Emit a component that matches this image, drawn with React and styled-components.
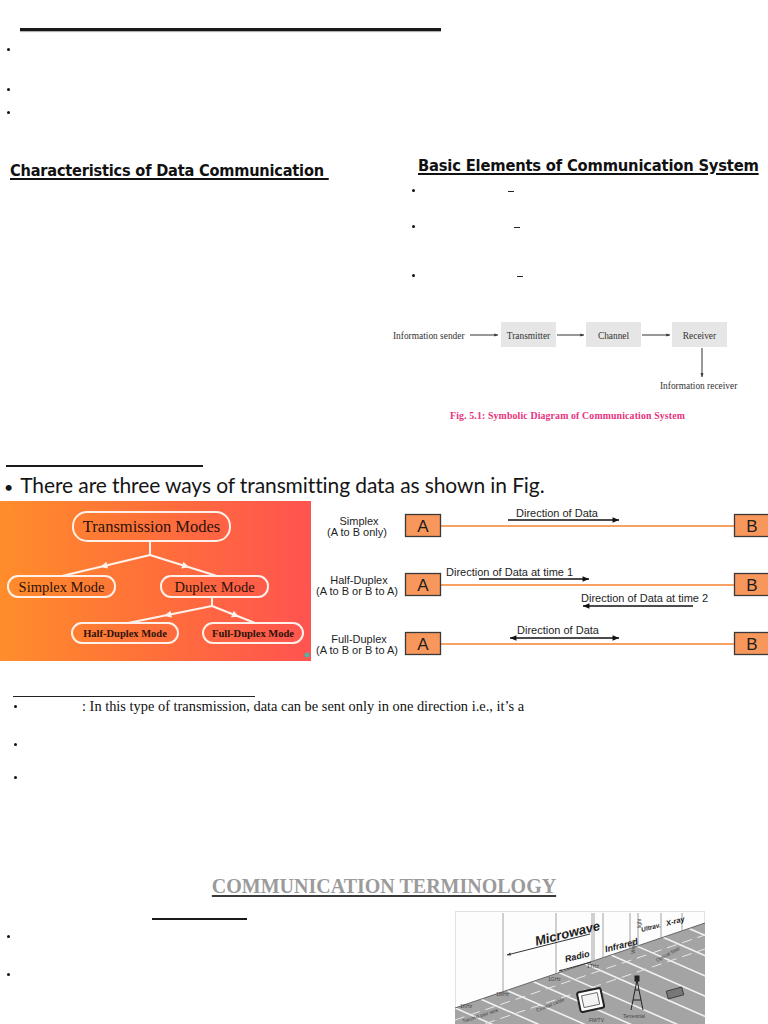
import React from "react";
import styled, { createGlobalStyle } from "styled-components";

const Global = createGlobalStyle`
  html, body { margin: 0; padding: 0; background: #fff; }
  body { font-family: "Liberation Serif", "Times New Roman", serif; color: #111; }
`;

const Page = styled.div`
  width: 768px;
  height: 1024px;
  overflow: hidden;
  background: #fff;
`;

const Section = styled.section`
  height: ${(p) => p.$h}px;
  padding-top: ${(p) => p.$pt || 0}px;
  box-sizing: border-box;
`;

const Rule = styled.div`
  height: ${(p) => p.$t || 2}px;
  width: ${(p) => p.$w}px;
  margin-left: ${(p) => p.$left}px;
  background: ${(p) => p.$c || "#1a1a1a"};
  box-shadow: ${(p) => (p.$shadow ? "0 1px 1px rgba(0,0,0,0.35)" : "none")};
`;

const DotRow = styled.div`
  display: flex;
  align-items: center;
  height: ${(p) => p.$h || 6}px;
  margin-top: ${(p) => p.$mt || 0}px;
  padding-left: ${(p) => p.$left || 0}px;
`;

const Dot = styled.span`
  display: block;
  width: 3px;
  height: 3px;
  border-radius: 50%;
  background: #111;
  flex: none;
`;

const Dash = styled.span`
  display: block;
  width: 6px;
  height: 1.5px;
  background: #222;
  margin-left: ${(p) => p.$gap}px;
  margin-top: 3px;
`;

const Columns = styled.div`
  display: grid;
  grid-template-columns: 380px 1fr;
  height: 100%;
`;

const Column = styled.div`
  display: flex;
  flex-direction: column;
  padding-top: ${(p) => p.$pt || 0}px;
`;

const Heading = styled.h2`
  margin: 0;
  padding-left: ${(p) => p.$left || 0}px;
  font-family: "DejaVu Sans Condensed", "DejaVu Sans", sans-serif;
  font-weight: bold;
  font-size: ${(p) => p.$size || 14}px;
  line-height: 18px;
  letter-spacing: -0.2px;
  color: #111;
  white-space: pre;
  text-decoration: underline;
  text-decoration-thickness: 1.6px;
  text-underline-offset: 2px;
`;

const Diagram = styled.svg`
  display: block;
  margin-top: ${(p) => p.$mt || 0}px;
  font-family: "Liberation Serif", serif;
`;

const Caption = styled.div`
  margin-top: 15px;
  padding-left: 70px;
  font-family: "Liberation Serif", serif;
  font-weight: bold;
  font-size: 9.8px;
  line-height: 12px;
  color: #e8327e;
  letter-spacing: 0.15px;
`;

const LeadLine = styled.p`
  margin: 6px 0 0 4px;
  font-family: Lato, "Open Sans", sans-serif;
  font-size: 21px;
  line-height: 24px;
  color: #151515;
  display: flex;
  align-items: baseline;
  gap: 7px;
  letter-spacing: -0.1px;
`;

const LeadBullet = styled.span`
  font-size: 16px;
`;

const FigureRow = styled.div`
  display: flex;
  height: 160px;
`;

const ModesPanel = styled.div`
  width: 311px;
  height: 160px;
  flex: none;
  background: linear-gradient(to right, #ff8d2b 0%, #ff7238 45%, #ff5350 100%);
`;

const ModeText = styled.text`
  font-family: "Liberation Serif", serif;
  fill: #2b130a;
`;

const WireText = styled.text`
  font-family: "Liberation Sans", Arial, sans-serif;
  font-size: ${(p) => p.$size || 11}px;
  fill: #1e1e1e;
`;

const BodyRow = styled.div`
  display: flex;
  align-items: center;
  height: 16px;
  margin-top: ${(p) => p.$mt || 0}px;
  padding-left: ${(p) => p.$left}px;
`;

const BodyText = styled.span`
  margin-left: 65px;
  font-family: "Liberation Serif", serif;
  font-size: 14.4px;
  line-height: 16px;
  color: #111;
`;

const TermHeading = styled.h2`
  margin: 0;
  text-align: center;
  font-family: "Liberation Serif", serif;
  font-weight: bold;
  font-size: 20px;
  line-height: 22px;
  color: #9b9b9b;
  text-decoration: underline;
  text-decoration-color: #3a3a3a;
  text-decoration-thickness: 2px;
  text-underline-offset: 2px;
`;

const TermRow = styled.div`
  display: flex;
  justify-content: space-between;
  margin-top: 13px;
`;

const TermLeft = styled.div`
  display: flex;
  flex-direction: column;
  padding-top: 8px;
`;

const Spectrum = styled.svg`
  display: block;
  margin-right: 63px;
  flex: none;
`;

const SpecText = styled.text`
  font-family: "Liberation Sans", Arial, sans-serif;
  font-size: ${(p) => p.$size || 5}px;
  font-weight: ${(p) => (p.$bold ? "bold" : "normal")};
  font-style: ${(p) => (p.$bold ? "italic" : "normal")};
  fill: ${(p) => (p.$bold ? "#1b1b1b" : "#444")};
`;

function Arrow({ x1, y1, x2, y2, color = "#222", head = 5, both = false, w = 1 }) {
  const a = Math.atan2(y2 - y1, x2 - x1);
  const tri = (x, y, ang) => {
    const p1 = [x - head * Math.cos(ang - 0.4), y - head * Math.sin(ang - 0.4)];
    const p2 = [x - head * Math.cos(ang + 0.4), y - head * Math.sin(ang + 0.4)];
    return `${x},${y} ${p1[0]},${p1[1]} ${p2[0]},${p2[1]}`;
  };
  return (
    <g>
      <line x1={x1} y1={y1} x2={x2} y2={y2} stroke={color} strokeWidth={w} />
      <polygon points={tri(x2, y2, a)} fill={color} />
      {both && <polygon points={tri(x1, y1, a + Math.PI)} fill={color} />}
    </g>
  );
}

function MidArrow({ x1, y1, x2, y2 }) {
  const a = Math.atan2(y2 - y1, x2 - x1);
  const mx = (x1 + x2) / 2 + Math.cos(a) * 6;
  const my = (y1 + y2) / 2 + Math.sin(a) * 6;
  const h = 8;
  const p1 = [mx - h * Math.cos(a - 0.45), my - h * Math.sin(a - 0.45)];
  const p2 = [mx - h * Math.cos(a + 0.45), my - h * Math.sin(a + 0.45)];
  return (
    <g>
      <line x1={x1} y1={y1} x2={x2} y2={y2} stroke="#fff3ec" strokeWidth="2" />
      <polygon points={`${mx},${my} ${p1[0]},${p1[1]} ${p2[0]},${p2[1]}`} fill="#fff3ec" />
    </g>
  );
}

function CommDiagram() {
  const box = { fill: "#e6e6e6" };
  return (
    <Diagram width="388" height="82" viewBox="0 0 388 82" $mt={35}>
      <text x="13" y="25.5" fontSize="9.4" fill="#333">Information sender</text>
      <Arrow x1={90} y1={22} x2={118} y2={22} color="#333" head={4} />
      <rect x="121" y="9" width="55" height="25" {...box} />
      <text x="148.5" y="25.5" fontSize="9.4" fill="#333" textAnchor="middle">Transmitter</text>
      <Arrow x1={177} y1={22} x2={204} y2={22} color="#333" head={4} />
      <rect x="206" y="9" width="55" height="25" {...box} />
      <text x="233.5" y="25.5" fontSize="9.4" fill="#333" textAnchor="middle">Channel</text>
      <Arrow x1={262} y1={22} x2={290} y2={22} color="#333" head={4} />
      <rect x="292" y="9" width="55" height="25" {...box} />
      <text x="319.5" y="25.5" fontSize="9.4" fill="#333" textAnchor="middle">Receiver</text>
      <Arrow x1={322} y1={35} x2={322} y2={64} color="#333" head={4} />
      <text x="280" y="76" fontSize="9.4" fill="#333">Information receiver</text>
    </Diagram>
  );
}

function ModesFigure() {
  const box = { fill: "none", stroke: "#fff1ea", strokeWidth: 2 };
  return (
    <ModesPanel>
      <svg width="311" height="160" viewBox="0 0 311 160">
        <line x1="150" y1="40" x2="150" y2="54" stroke="#fff3ec" strokeWidth="2" />
        <MidArrow x1={150} y1={54} x2={62} y2={75} />
        <MidArrow x1={150} y1={54} x2={217} y2={75} />
        <line x1="212" y1="96" x2="212" y2="105" stroke="#fff3ec" strokeWidth="2" />
        <MidArrow x1={212} y1={105} x2={128} y2={122} />
        <MidArrow x1={212} y1={105} x2={255} y2={122} />

        <rect x="73" y="11" width="157" height="29" rx="14" {...box} />
        <ModeText x="151.5" y="31" fontSize="16.5" textAnchor="middle">Transmission Modes</ModeText>

        <rect x="8" y="75" width="107" height="21" rx="10" {...box} />
        <ModeText x="61.5" y="90.5" fontSize="14.5" textAnchor="middle">Simplex Mode</ModeText>

        <rect x="161" y="75" width="107" height="21" rx="10" {...box} />
        <ModeText x="214.5" y="90.5" fontSize="14.5" textAnchor="middle">Duplex Mode</ModeText>

        <rect x="72" y="122" width="106" height="20" rx="10" {...box} />
        <ModeText x="125" y="136" fontSize="10.5" fontWeight="bold" textAnchor="middle">Half-Duplex Mode</ModeText>

        <rect x="203" y="122" width="100" height="20" rx="10" {...box} />
        <ModeText x="253" y="136" fontSize="10.5" fontWeight="bold" textAnchor="middle">Full-Duplex Mode</ModeText>

        <circle cx="307" cy="154" r="2.5" fill="#4fb3a8" />
      </svg>
    </ModesPanel>
  );
}

function DuplexFigure() {
  const rows = [
    { y: 13, label: "Simplex", sub: "(A to B only)" },
    { y: 72, label: "Half-Duplex", sub: "(A to B or B to A)" },
    { y: 131, label: "Full-Duplex", sub: "(A to B or B to A)" },
  ];
  return (
    <svg width="457" height="160" viewBox="0 0 457 160">
      {rows.map((r) => (
        <g key={r.y}>
          <WireText x="48" y={r.y + 11} textAnchor="middle">{r.label}</WireText>
          <WireText x="46" y={r.y + 22} textAnchor="middle">{r.sub}</WireText>
          <line x1="129" y1={r.y + 12} x2="423" y2={r.y + 12} stroke="#f5832e" strokeWidth="1.6" />
          <rect x="94.5" y={r.y + 0.5} width="35" height="22" fill="#f7975b" stroke="#3a3a3a" strokeWidth="1.3" />
          <WireText x="112" y={r.y + 18} $size={17} textAnchor="middle">A</WireText>
          <rect x="423.5" y={r.y + 0.5} width="35" height="22" fill="#f7975b" stroke="#3a3a3a" strokeWidth="1.3" />
          <WireText x="441" y={r.y + 18} $size={17} textAnchor="middle">B</WireText>
        </g>
      ))}
      <WireText x="205" y="16">Direction of Data</WireText>
      <Arrow x1={197} y1={19} x2={308} y2={19} color="#111" head={7} w={1.6} />

      <WireText x="135" y="75">Direction of Data at time 1</WireText>
      <Arrow x1={168} y1={78} x2={278} y2={78} color="#111" head={7} w={1.6} />
      <WireText x="270" y="101">Direction of Data at time 2</WireText>
      <Arrow x1={382} y1={105} x2={272} y2={105} color="#111" head={7} w={1.6} />

      <WireText x="206" y="133">Direction of Data</WireText>
      <Arrow x1={199} y1={137} x2={308} y2={137} color="#111" head={7} w={1.6} both />
    </svg>
  );
}

function SpectrumFigure() {
  const edge = (x) => 98 - (85 / 250) * x;
  const verts = [48, 101, 137, 139, 148, 175, 183, 206, 227];
  const stripes = [];
  for (let i = -6; i < 12; i++) {
    const x0 = i * 26;
    stripes.push(
      <line key={"s" + i} x1={x0} y1={edge(x0)} x2={x0 + 160} y2={edge(x0) + 70} stroke="#f2f2f2" strokeWidth="1.6" />
    );
  }
  return (
    <Spectrum width="250" height="114" viewBox="0 0 250 114">
      <defs>
        <clipPath id="floor">
          <polygon points={`0,${edge(0)} 250,${edge(250)} 250,114 0,114`} />
        </clipPath>
      </defs>
      <rect x="0" y="0" width="250" height="114" fill="#fdfdfd" />
      <rect x="0.5" y="1.5" width="249" height="112" fill="none" stroke="#e2e2e2" />
      <polygon points={`0,${edge(0)} 250,${edge(250)} 250,114 0,114`} fill="#a4a4a4" />
      <g clipPath="url(#floor)">
        {stripes}
        <line x1="0" y1={edge(0) + 12} x2="250" y2={edge(250) + 12} stroke="#e8e8e8" strokeWidth="1" strokeDasharray="10 6" />
        <line x1="0" y1={edge(0) + 26} x2="250" y2={edge(250) + 26} stroke="#e8e8e8" strokeWidth="1" strokeDasharray="10 6" />
      </g>
      <line x1="0" y1={edge(0)} x2="250" y2={edge(250)} stroke="#666" strokeWidth="1" />
      {verts.map((x) => (
        <line key={x} x1={x} y1="3" x2={x} y2={edge(x)} stroke="#8a8a8a" strokeWidth="0.8" />
      ))}
      <Arrow x1={135} y1={24} x2={52} y2={45} color="#333" head={4} />
      <SpecText x="80" y="31" $size={13} $bold transform="rotate(-14 100 28)">Microwave</SpecText>
      <Arrow x1={136} y1={52} x2={104} y2={61} color="#333" head={3} />
      <SpecText x="110" y="50" $size={9} $bold transform="rotate(-14 120 48)">Radio</SpecText>
      <SpecText x="150" y="40" $size={9} $bold transform="rotate(-14 160 38)">Infrared</SpecText>
      <SpecText x="186" y="21" $size={6.5} $bold transform="rotate(-14 190 18)">Ultrav.</SpecText>
      <SpecText x="211" y="15" $size={7.5} $bold transform="rotate(-14 215 12)">X-ray</SpecText>
      <SpecText x="0" y="0" transform="translate(180 44) rotate(-90)">Visible</SpecText>
      <SpecText x="0" y="0" transform="translate(186 18) rotate(-90)">light</SpecText>
      <SpecText x="132" y="58">1THz</SpecText>
      <SpecText x="93" y="71">1GHz</SpecText>
      <SpecText x="41" y="86">1MHz</SpecText>
      <SpecText x="5" y="98">1KHz</SpecText>
      <SpecText x="8" y="113" transform="rotate(-18 8 113)">Twisted-pair wire</SpecText>
      <SpecText x="82" y="102" transform="rotate(-22 82 102)">Coaxial cable</SpecText>
      <SpecText x="202" y="52" transform="rotate(-28 202 52)">Optical fiber</SpecText>
      <g transform="rotate(-12 136 92)">
        <rect x="124" y="80" width="24" height="20" fill="#fff" stroke="#222" strokeWidth="2" rx="2" />
        <rect x="128" y="84" width="16" height="12" fill="#f4f4f4" stroke="#555" strokeWidth="0.8" />
      </g>
      <SpecText x="134" y="112">FM/TV</SpecText>
      <g stroke="#222" strokeWidth="1" fill="none">
        <line x1="182" y1="70" x2="176" y2="100" />
        <line x1="182" y1="70" x2="188" y2="100" />
        <line x1="178" y1="90" x2="186" y2="90" />
        <line x1="180" y1="80" x2="184" y2="80" />
        <rect x="180" y="66" width="4" height="5" fill="#222" />
      </g>
      <SpecText x="168" y="108">Terrestrial</SpecText>
      <g transform="rotate(-15 220 83)">
        <rect x="212" y="79" width="16" height="8" fill="#777" stroke="#333" strokeWidth="0.8" />
      </g>
    </Spectrum>
  );
}

export default function App() {
  return (
    <Page>
      <Global />
      <Section $h={150} $pt={28}>
        <Rule $w={421} $left={20} $t={3} $shadow />
        <DotRow $left={7} $mt={15}>
          <Dot />
        </DotRow>
        <DotRow $left={7} $mt={34}>
          <Dot />
        </DotRow>
        <DotRow $left={7} $mt={17}>
          <Dot />
        </DotRow>
      </Section>

      <Section $h={290}>
        <Columns>
          <Column $pt={12}>
            <Heading $left={10} $size={16.2}>{"Characteristics of Data Communication "}</Heading>
          </Column>
          <Column $pt={7}>
            <Heading $left={38} $size={16.4}>Basic Elements of Communication System</Heading>
            <DotRow $left={32} $mt={12}>
              <Dot />
              <Dash $gap={93} />
            </DotRow>
            <DotRow $left={32} $mt={30}>
              <Dot />
              <Dash $gap={99} />
            </DotRow>
            <DotRow $left={32} $mt={43}>
              <Dot />
              <Dash $gap={102} />
            </DotRow>
            <CommDiagram />
            <Caption>Fig. 5.1: Symbolic Diagram of Communication System</Caption>
          </Column>
        </Columns>
      </Section>

      <Section $h={61} $pt={25}>
        <Rule $w={197} $left={6} $t={2} />
        <LeadLine>
          <LeadBullet>•</LeadBullet>
          <span>There are three ways of transmitting data as shown in Fig.</span>
        </LeadLine>
      </Section>

      <FigureRow>
        <ModesFigure />
        <DuplexFigure />
      </FigureRow>

      <Section $h={189} $pt={35}>
        <Rule $w={242} $left={13} $t={1.3} $c="#222" />
        <BodyRow $left={14} $mt={1}>
          <Dot />
          <BodyText>: In this type of transmission, data can be sent only in one direction i.e., it’s a</BodyText>
        </BodyRow>
        <DotRow $left={14} $mt={27}>
          <Dot />
        </DotRow>
        <DotRow $left={14} $mt={27}>
          <Dot />
        </DotRow>
      </Section>

      <Section $h={174} $pt={25}>
        <TermHeading>COMMUNICATION TERMINOLOGY</TermHeading>
        <TermRow>
          <TermLeft>
            <Rule $w={95} $left={152} $t={2} />
            <DotRow $left={7} $mt={13}>
              <Dot />
            </DotRow>
            <DotRow $left={7} $mt={32}>
              <Dot />
            </DotRow>
          </TermLeft>
          <SpectrumFigure />
        </TermRow>
      </Section>
    </Page>
  );
}
